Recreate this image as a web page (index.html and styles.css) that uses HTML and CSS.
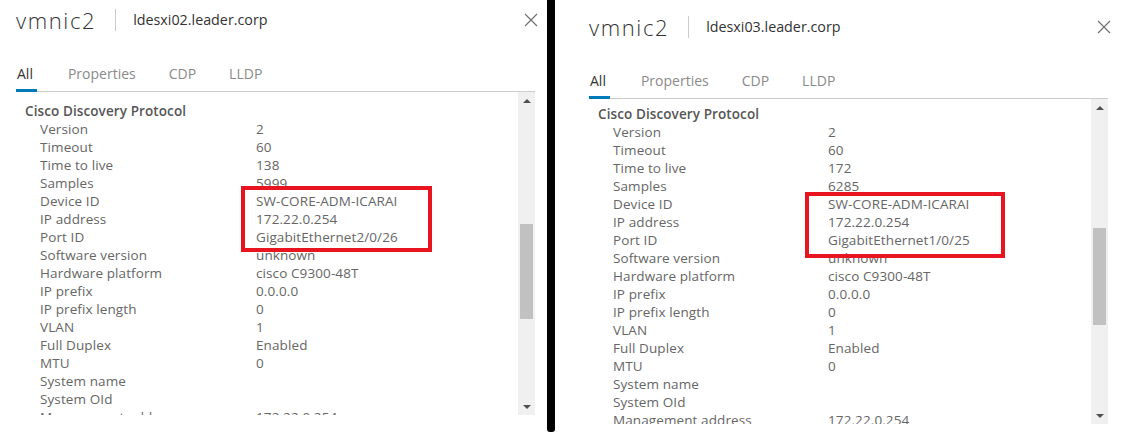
FILE: index.html
```html
<!DOCTYPE html>
<html>
<head>
<meta charset="utf-8">
<link rel="stylesheet" href="styles.css">
</head>
<body>
<div class="stage">
  <section class="panel panel-a">
    <header class="panel-head">
      <h1 class="title">vmnic2</h1>
      <span class="sep"></span>
      <span class="host">ldesxi02.leader.corp</span>
      <span class="close"><svg width="14" height="14" viewBox="0 0 14 14"><path d="M1 1L13 13M13 1L1 13" stroke="#707070" stroke-width="1.2" fill="none"/></svg></span>
    </header>
    <nav class="tabs">
      <span class="tab active">All</span>
      <span class="tab">Properties</span>
      <span class="tab">CDP</span>
      <span class="tab">LLDP</span>
    </nav>
    <div class="body">
      <div class="content">
        <div class="group">Cisco Discovery Protocol</div>
        <div class="row"><span>Version</span><span>2</span></div>
        <div class="row"><span>Timeout</span><span>60</span></div>
        <div class="row"><span>Time to live</span><span>138</span></div>
        <div class="row"><span>Samples</span><span>5999</span></div>
        <div class="row"><span>Device ID</span><span>SW-CORE-ADM-ICARAI</span></div>
        <div class="row"><span>IP address</span><span>172.22.0.254</span></div>
        <div class="row"><span>Port ID</span><span>GigabitEthernet2/0/26</span></div>
        <div class="row"><span>Software version</span><span>unknown</span></div>
        <div class="row"><span>Hardware platform</span><span>cisco C9300-48T</span></div>
        <div class="row"><span>IP prefix</span><span>0.0.0.0</span></div>
        <div class="row"><span>IP prefix length</span><span>0</span></div>
        <div class="row"><span>VLAN</span><span>1</span></div>
        <div class="row"><span>Full Duplex</span><span>Enabled</span></div>
        <div class="row"><span>MTU</span><span>0</span></div>
        <div class="row"><span>System name</span><span></span></div>
        <div class="row"><span>System OId</span><span></span></div>
        <div class="row"><span>Management address</span><span>172.22.0.254</span></div>
        <div class="mark mark-a"></div>
      </div>
      <div class="scrollbar">
        <span class="arrow up"></span>
        <span class="track"><span class="thumb"></span></span>
        <span class="arrow down"></span>
      </div>
    </div>
  </section>
  <div class="divider"></div>
  <section class="panel panel-b">
    <header class="panel-head">
      <h1 class="title">vmnic2</h1>
      <span class="sep"></span>
      <span class="host">ldesxi03.leader.corp</span>
      <span class="close"><svg width="14" height="14" viewBox="0 0 14 14"><path d="M1 1L13 13M13 1L1 13" stroke="#707070" stroke-width="1.2" fill="none"/></svg></span>
    </header>
    <nav class="tabs">
      <span class="tab active">All</span>
      <span class="tab">Properties</span>
      <span class="tab">CDP</span>
      <span class="tab">LLDP</span>
    </nav>
    <div class="body">
      <div class="content">
        <div class="group">Cisco Discovery Protocol</div>
        <div class="row"><span>Version</span><span>2</span></div>
        <div class="row"><span>Timeout</span><span>60</span></div>
        <div class="row"><span>Time to live</span><span>172</span></div>
        <div class="row"><span>Samples</span><span>6285</span></div>
        <div class="row"><span>Device ID</span><span>SW-CORE-ADM-ICARAI</span></div>
        <div class="row"><span>IP address</span><span>172.22.0.254</span></div>
        <div class="row"><span>Port ID</span><span>GigabitEthernet1/0/25</span></div>
        <div class="row"><span>Software version</span><span>unknown</span></div>
        <div class="row"><span>Hardware platform</span><span>cisco C9300-48T</span></div>
        <div class="row"><span>IP prefix</span><span>0.0.0.0</span></div>
        <div class="row"><span>IP prefix length</span><span>0</span></div>
        <div class="row"><span>VLAN</span><span>1</span></div>
        <div class="row"><span>Full Duplex</span><span>Enabled</span></div>
        <div class="row"><span>MTU</span><span>0</span></div>
        <div class="row"><span>System name</span><span></span></div>
        <div class="row"><span>System OId</span><span></span></div>
        <div class="row"><span>Management address</span><span>172.22.0.254</span></div>
        <div class="mark mark-b"></div>
      </div>
      <div class="scrollbar">
        <span class="arrow up"></span>
        <span class="track"><span class="thumb"></span></span>
        <span class="arrow down"></span>
      </div>
    </div>
  </section>
</div>
</body>
</html>
```

FILE: styles.css
```css
* { box-sizing: border-box; }
html, body { margin: 0; padding: 0; background: #fff; }
body {
  font-family: "Open Sans", "Liberation Sans", sans-serif;
  color: #666;
  width: 1125px;
  height: 437px;
  overflow: hidden;
}
.stage {
  display: flex;
  align-items: flex-start;
  height: 437px;
}
.panel {
  display: flex;
  flex-direction: column;
  flex: none;
}
.panel-a { width: 547px; padding: 0 12px 0 16px; }
.panel-b { width: 570px; padding: 7px 17px 0 34px; }

.divider {
  flex: none;
  width: 8px;
  height: 432px;
  background: #000;
  border-radius: 0 0 3px 3px;
}

.panel-head {
  display: flex;
  align-items: center;
  height: 38px;
  padding-top: 2px;
}
.title {
  margin: 0;
  font-size: 22px;
  font-weight: 300;
  color: #333;
  letter-spacing: 1.6px;
  line-height: 26px;
}
.sep {
  width: 1px;
  height: 22px;
  background: #ccc;
  margin: 0 17px 0 19px;
}
.host {
  font-size: 14.3px;
  color: #333;
  line-height: 20px;
}
.close {
  margin-left: auto;
  margin-right: -3px;
  display: flex;
  width: 14px;
  height: 14px;
}
.panel-b .close { margin-right: -3px; }

.tabs {
  display: flex;
  gap: 30px;
  height: 54px;
  align-items: flex-end;
  border-bottom: 1px solid #ccc;
  padding-left: 0;
}
.tab {
  font-size: 14px;
  color: #8a8a8a;
  line-height: 20px;
  padding: 0 2px 5px 1px;
  border-bottom: 3px solid transparent;
  margin-bottom: -1px;
}
.tab.active {
  color: #333;
  border-bottom-color: #0079b8;
  padding-right: 4px;
}

.body {
  display: flex;
  height: 323px;
  overflow: hidden;
}
.panel-b .body { height: 325px; }
.content {
  position: relative;
  flex: 1;
  padding-top: 10px;
  overflow: hidden;
  font-size: 13.5px;
  letter-spacing: 0.1px;
}
.panel-b .content { padding-top: 6px; }
.group {
  line-height: 18px;
  padding-left: 9px;
  font-weight: 600;
  color: #565656;
}
.row {
  display: grid;
  grid-template-columns: 216px 1fr;
  line-height: 18px;
  padding-left: 24px;
  height: 18px;
}
.panel-b .row { grid-template-columns: 215px 1fr; }

.mark {
  position: absolute;
  border: 4px solid #e8141f;
}
.mark-a { left: 225px; top: 94px; width: 191px; height: 66px; }
.mark-b { left: 216px; top: 93px; width: 200px; height: 66px; }

.scrollbar {
  flex: none;
  width: 17px;
  background: #f0f0f0;
  display: flex;
  flex-direction: column;
  align-items: center;
}
.arrow {
  flex: none;
  width: 17px;
  height: 17px;
  display: flex;
  align-items: center;
  justify-content: center;
}
.arrow::before {
  content: "";
  border-left: 4px solid transparent;
  border-right: 4px solid transparent;
}
.arrow.up::before { border-bottom: 4px solid #505050; }
.arrow.down::before { border-top: 4px solid #505050; }
.track {
  flex: 1;
  width: 100%;
  padding: 115px 2px 0;
}
.panel-b .track { padding-top: 112px; }
.thumb {
  display: block;
  height: 95px;
  background: #c1c1c1;
}
.panel-b .thumb { height: 97px; }
```
